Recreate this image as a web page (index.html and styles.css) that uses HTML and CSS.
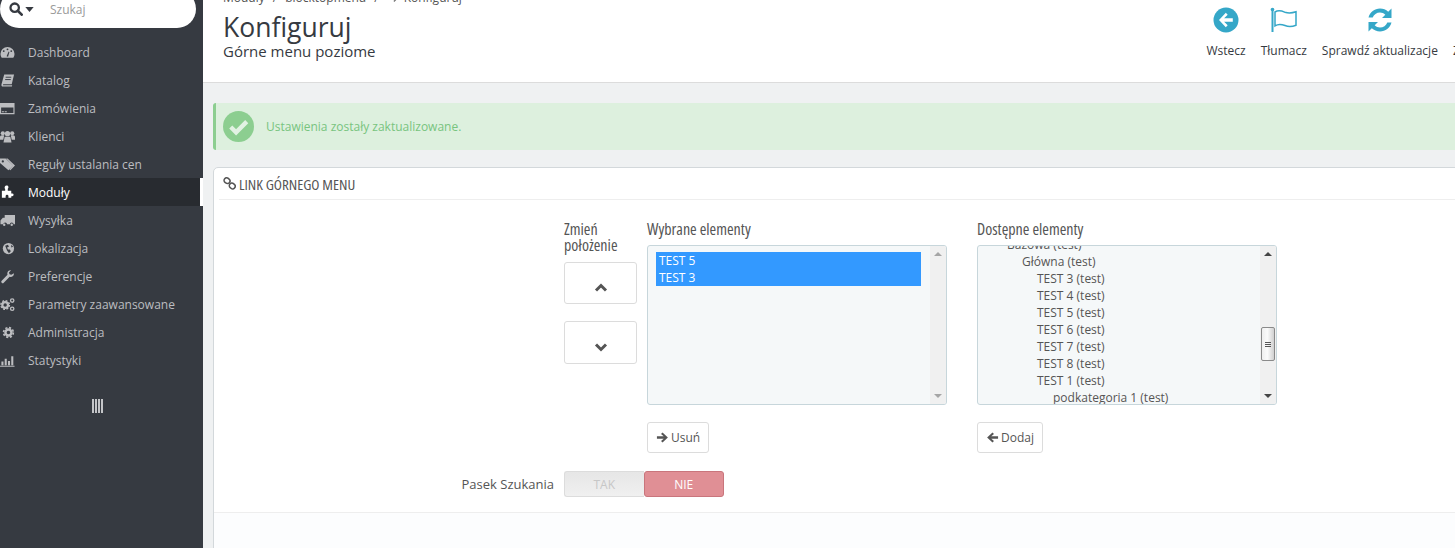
FILE: index.html
```html
<!DOCTYPE html>
<html lang="pl">
<head>
<meta charset="utf-8">
<title>Konfiguruj</title>
<link rel="stylesheet" href="styles.css">
</head>
<body>
<div class="app">
  <nav class="sidebar">
    <div class="search">
      <svg class="search-icon" viewBox="0 0 16 16" width="14" height="14"><circle cx="6.5" cy="6.5" r="4.8" fill="none" stroke="#363a41" stroke-width="2.6"/><path d="M10 10l4.5 4.5" stroke="#363a41" stroke-width="3" stroke-linecap="round"/></svg>
      <svg class="search-caret" viewBox="0 0 10 6" width="9" height="5"><path d="M0 0h10L5 6z" fill="#363a41"/></svg>
      <span class="search-text">Szukaj</span>
    </div>
    <ul class="menu">
      <li class="item"><svg class="ico" viewBox="0 0 16 16"><path d="M8 2a7.5 7.5 0 0 0-7.5 7.5c0 1.600.5 3 1.300 4.200h12.400c.8-1.200 1.300-2.600 1.300-4.200A7.500 7.500 0 0 0 8 2z"/><circle cx="4" cy="6.500" r="1" fill="#363a41"/><circle cx="8" cy="4.600" r="1" fill="#363a41"/><circle cx="12" cy="6.500" r="1" fill="#363a41"/><path d="M7 12l2.200-5 .8.400-1.400 5z" fill="#363a41"/></svg>Dashboard</li>
      <li class="item"><svg class="ico" viewBox="0 0 16 16"><path d="M4.500 1.500h10.500l-2.500 10.500H4c-.7 0-.9.600-.7 1h9.700l-.3 1.500H3c-1.200 0-1.700-1.200-1.400-2.500z"/><path d="M6 4.500h6M5.500 7h6" stroke="#363a41"/></svg>Katalog</li>
      <li class="item"><svg class="ico" viewBox="0 0 16 16"><path fill-rule="evenodd" d="M0 2h15.500v12H0zM1.200 7v5.800h13.100V7z"/><path d="M2 11h2.200v1H2zM5 11h2.200v1H5z"/></svg>Zamówienia</li>
      <li class="item"><svg class="ico" viewBox="0 0 16 16"><circle cx="3" cy="4.500" r="2.200"/><circle cx="13" cy="4.500" r="2.200"/><circle cx="8" cy="5" r="2.800"/><path d="M0 8.500c0-1 1-1.800 2-1.800h2.500L3.500 11.500H0zM16 8.500c0-1-1-1.800-2-1.800h-2.500l1 4.800H16zM5 8.300h6l1.300 6.200H3.700z"/></svg>Klienci</li>
      <li class="item"><svg class="ico" viewBox="0 0 16 16"><path fill-rule="evenodd" d="M0 1.500h6l8 7.500-5 5L0 6.500zM3 3.500a1.200 1.200 0 1 0 0 2.400A1.200 1.200 0 0 0 3 3.500z"/><path d="M8 1.500l8 7.500-5 5-1-.8L13.700 9 6.500 1.500z"/></svg>Reguły ustalania cen</li>
      <li class="item item-active"><svg class="ico" viewBox="0 0 16 16"><path d="M5 2.500a2 2 0 1 1 3.300 1.500V6H12v3h1a1.500 1.500 0 1 1 0 3h-1v1.500H9V12a1.500 1.500 0 1 0-3 0v1.500H2V6h3.500V4.200A2 2 0 0 1 5 2.500z"/></svg>Moduły</li>
      <li class="item"><svg class="ico" viewBox="0 0 16 16"><path d="M5 2h11v10h-1.500a2 2 0 0 0-4 0h-3a2 2 0 0 0-4 0H.500V8L3 5h2z"/><circle cx="4.500" cy="12.500" r="1.300"/><circle cx="12.500" cy="12.500" r="1.300"/></svg>Wysyłka</li>
      <li class="item"><svg class="ico" viewBox="0 0 16 16"><circle cx="9" cy="8" r="6"/><path d="M5.500 5l3-1 1 2-2 1 1 2 2 0 1 2-2 2-2-3zM12 4l2 2-2 1z" fill="#363a41"/></svg>Lokalizacja</li>
      <li class="item"><svg class="ico" viewBox="0 0 16 16"><path d="M14.800 4.500c.4 2-1 3.800-3 4-.6 0-1.100 0-1.500-.2l-6.300 6.300a1.500 1.500 0 0 1-2.200-2.200L8 6c-.2-.5-.3-1-.2-1.600.2-2 2-3.400 4-3l-2.200 2.300.5 2 2 .5z"/></svg>Preferencje</li>
      <li class="item"><svg class="ico" viewBox="0 0 16 16"><circle cx="5.500" cy="8.500" r="3" fill="none" stroke="#bcbdc0" stroke-width="2.400"/><circle cx="5.500" cy="8.500" r="4.600" fill="none" stroke="#bcbdc0" stroke-width="1.500" stroke-dasharray="2 1.600"/><circle cx="13" cy="3.800" r="1.800" fill="none" stroke="#bcbdc0" stroke-width="1.400"/><circle cx="13" cy="12.500" r="1.800" fill="none" stroke="#bcbdc0" stroke-width="1.400"/></svg>Parametry zaawansowane</li>
      <li class="item"><svg class="ico" viewBox="0 0 16 16"><circle cx="9" cy="8" r="3.200" fill="none" stroke="#bcbdc0" stroke-width="2.600"/><circle cx="9" cy="8" r="5.200" fill="none" stroke="#bcbdc0" stroke-width="1.800" stroke-dasharray="2.300 1.780"/></svg>Administracja</li>
      <li class="item"><svg class="ico" viewBox="0 0 16 16"><path d="M0 13.500h15.500v1.200H0zM1.500 9h2.200v4H1.500zM5 6h2.200v7H5zM8.500 8.500h2.200V13H8.500zM12 3.500h2.200V13H12z"/></svg>Statystyki</li>
    </ul>
    <div class="collapse"><span></span><span></span><span></span><span></span></div>
  </nav>

  <main class="content">
    <header class="head">
      <div class="head-title">
        <div class="crumbs"><span>Moduły</span><span class="sep">/</span><span>blocktopmenu</span><span class="sep">/</span><svg viewBox="0 0 8 10" width="7" height="10"><path d="M1 9l4-4-4-4" fill="none" stroke="#777" stroke-width="1.500"/></svg><span>Konfiguruj</span></div>
        <h1>Konfiguruj</h1>
        <h2>Górne menu poziome</h2>
      </div>
      <div class="tools">
        <div class="tool">
          <svg viewBox="0 0 26 26" width="26" height="26"><circle cx="13" cy="13" r="12.500" fill="#35a7c8"/><path d="M12.800 5.800L6 13l6.800 7.200 1.900-1.900-3.600-3.600h8.700v-3.400h-8.700l3.600-3.600z" fill="#fff"/></svg>
          <span>Wstecz</span>
        </div>
        <div class="tool">
          <svg viewBox="0 0 28 26" width="28" height="26"><path d="M2.500 3v22" stroke="#35a7c8" stroke-width="2"/><circle cx="2.500" cy="2.500" r="1.800" fill="#35a7c8"/><path d="M5 5c4-2.500 7-1 10 .3 3 1 5.500 1.400 11-.5v13.400c-5 2-8 1.500-11 .3-3-1.200-6-2.300-10 .3z" fill="none" stroke="#35a7c8" stroke-width="1.500"/></svg>
          <span>Tłumacz</span>
        </div>
        <div class="tool">
          <svg viewBox="0 0 26 26" width="26" height="26"><path d="M1.500 10.500C3 5 7.500 1.500 13 1.500c3.200 0 6 1.200 8.200 3.200L24.500 1.500V11h-9.500l3.300-3.300C16.800 6.300 15 5.500 13 5.500c-3.300 0-6.200 2-7.300 5z" fill="#35a7c8"/><path d="M24.500 15.500C23 21 18.500 24.500 13 24.500c-3.200 0-6-1.200-8.200-3.200L1.500 24.500V15h9.500l-3.300 3.300c1.500 1.400 3.300 2.200 5.300 2.200 3.300 0 6.200-2 7.300-5z" fill="#35a7c8"/></svg>
          <span>Sprawdź aktualizacje</span>
        </div>
        <div class="tool">
          <span class="tool-blank"></span>
          <span>Zarządzaj</span>
        </div>
      </div>
    </header>

    <div class="alert">
      <svg viewBox="0 0 32 32" width="31" height="31"><circle cx="16" cy="16" r="16" fill="#8cce90"/><path d="M8 16.500l5.500 5.500L24.500 11" fill="none" stroke="#e2f2e3" stroke-width="4.500"/></svg>
      <span>Ustawienia zostały zaktualizowane.</span>
    </div>

    <section class="panel">
      <div class="panel-head">
        <svg viewBox="0 0 14 14" width="13" height="13"><g fill="none" stroke="#555" stroke-width="1.700"><rect x="1" y="1" width="6.500" height="5.500" rx="2.700" transform="rotate(40 4 4)"/><rect x="6.500" y="7" width="6.500" height="5.500" rx="2.700" transform="rotate(40 10 10)"/></g></svg>
        <span>LINK GÓRNEGO MENU</span>
      </div>
      <div class="panel-body">
        <div class="pickers">
          <div class="col-move">
            <div class="col-title">Zmień położenie</div>
            <button class="move move-up"><svg viewBox="0 0 14 9" width="14" height="9"><path d="M2 7.500l5-5 5 5" fill="none" stroke="#555" stroke-width="3"/></svg></button>
            <button class="move move-down"><svg viewBox="0 0 14 9" width="14" height="9"><path d="M2 1.500l5 5 5-5" fill="none" stroke="#555" stroke-width="3"/></svg></button>
          </div>
          <div class="col-list">
            <div class="col-title">Wybrane elementy</div>
            <div class="listbox">
              <div class="options options-selected">
                <div class="opt opt-on">TEST 5</div>
                <div class="opt opt-on">TEST 3</div>
              </div>
              <div class="scrollbar">
                <svg class="arrow" viewBox="0 0 8 4" width="8" height="4"><path d="M0 4h8L4 0z"/></svg>
                <svg class="arrow" viewBox="0 0 8 4" width="8" height="4"><path d="M0 0h8L4 4z"/></svg>
              </div>
            </div>
            <button class="btn"><svg viewBox="0 0 14 14" width="13" height="13"><path d="M7 1.500l5.800 5.500L7 12.500l-1.600-1.600L8.300 8.300H1V5.700h7.300L5.400 3.100z" fill="#555"/></svg>Usuń</button>
          </div>
          <div class="col-list col-avail">
            <div class="col-title">Dostępne elementy</div>
            <div class="listbox">
              <div class="options options-avail">
                <div class="opt l1">Bazowa (test)</div>
                <div class="opt l2">Główna (test)</div>
                <div class="opt l3">TEST 3 (test)</div>
                <div class="opt l3">TEST 4 (test)</div>
                <div class="opt l3">TEST 5 (test)</div>
                <div class="opt l3">TEST 6 (test)</div>
                <div class="opt l3">TEST 7 (test)</div>
                <div class="opt l3">TEST 8 (test)</div>
                <div class="opt l3">TEST 1 (test)</div>
                <div class="opt l4">podkategoria 1 (test)</div>
              </div>
              <div class="scrollbar">
                <svg class="arrow" viewBox="0 0 8 4" width="8" height="4"><path d="M0 4h8L4 0z" fill="#444"/></svg>
                <div class="thumb"><i></i><i></i><i></i></div>
                <svg class="arrow" viewBox="0 0 8 4" width="8" height="4"><path d="M0 0h8L4 4z" fill="#444"/></svg>
              </div>
            </div>
            <button class="btn"><svg viewBox="0 0 14 14" width="13" height="13"><path d="M7 1.500L1.200 7 7 12.500l1.600-1.600L5.700 8.300H13V5.700H5.700l2.900-2.600z" fill="#555"/></svg>Dodaj</button>
          </div>
        </div>
        <div class="row-switch">
          <label class="switch-label">Pasek Szukania</label>
          <div class="switch"><span class="sw-yes">TAK</span><span class="sw-no">NIE</span></div>
        </div>
      </div>
      <div class="panel-foot"></div>
    </section>
  </main>
</div>
</body>
</html>
```
FILE: styles.css
```css
* { box-sizing: border-box; }
html, body { margin: 0; height: 548px; overflow: hidden; }
body { font-family: "Open Sans", sans-serif; font-size: 12px; color: #555; background: #eff1f2; }
.app { display: flex; width: 1455px; height: 548px; overflow: hidden; }

.sidebar { flex: 0 0 203px; background: #363a41; height: 548px; }
.search { display: flex; align-items: center; width: 196px; height: 38px; margin-top: -10px; background: #fff; border-radius: 19px; padding-left: 9px; }
.search-icon { margin-right: 2px; }
.search-text { margin-left: 16px; color: #9a9a9a; font-size: 12px; }
.menu { list-style: none; margin: 10px 0 0; padding: 0; }
.item { display: flex; align-items: center; height: 28px; color: #bcbdc0; font-size: 12px; }
.ico { width: 15px; height: 15px; margin-right: 13px; fill: #bcbdc0; flex: none; }
.item-active { background: #282b30; color: #fff; border-right: 3px solid #fff; }
.item-active .ico { fill: #fff; }
.collapse { display: flex; gap: 1px; justify-content: center; margin: 25px 0 0 -8px; height: 14px; }
.collapse span { width: 2px; background: #c4c5c8; }

.content { flex: 1; min-width: 0; display: flex; flex-direction: column; overflow: hidden; }
.head { display: flex; height: 83px; flex: none; background: #fff; border-bottom: 1px solid #dcdcdc; }
.head-title { flex: 0 0 1003.5px; padding-left: 20px; }
.crumbs { display: flex; align-items: center; height: 17px; margin-top: -11px; font-size: 12px; color: #555; }
.sep { margin: 0 8px; }
.crumbs svg { margin: 0 4px 0 6px; }
h1 { margin: 5px 0 0; font-size: 26.5px; line-height: 33px; font-weight: 400; color: #363a41; }
h2 { margin: 0; font-size: 15px; line-height: 15px; font-weight: 400; color: #363a41; }
.tools { display: flex; gap: 15px; flex: none; }
.tool { display: flex; flex-direction: column; align-items: center; padding-top: 7px; font-size: 12px; color: #363a41; white-space: nowrap; }
.tool svg { height: 26px; }
.tool span:last-child { margin-top: 9px; }
.tool-blank { height: 26px; }

.alert { display: flex; align-items: center; gap: 12px; margin: 20px 0 0 10px; height: 47px; padding-left: 7px; background: #ddf0de; border-left: 3px solid #8cce90; border-radius: 3px 0 0 3px; color: #78c47e; font-size: 12px; }

.panel { margin: 17px -10px -10px 10px; background: #fff; border: 1px solid #d3d8db; border-radius: 5px; flex: 1; display: flex; flex-direction: column; }
.panel-head { display: flex; align-items: center; gap: 3px; height: 32px; margin-left: 5px; padding-left: 4px; border-bottom: 1px solid #eee; font-stretch: 75%; font-size: 15px; color: #555; }
.panel-body { flex: none; height: 312px; }
.pickers { display: flex; padding: 21px 0 0 350px; }
.col-move { width: 73px; margin-right: 10px; }
.col-list { width: 300px; }
.col-avail { margin-left: 30px; }
.col-title { font-stretch: 75%; font-size: 16px; line-height: 16px; color: #555; margin-bottom: 8px; }
.col-move .col-title { margin-bottom: 9px; }
.move { display: flex; justify-content: center; width: 73px; background: #fff; border: 1px solid #dcdcdc; border-radius: 3px; padding: 0; }
.move-up { height: 42px; padding-top: 20px; margin-bottom: 17px; }
.move-down { height: 43px; padding-top: 21px; }
.listbox { display: flex; height: 160px; background: #f5f8f9; border: 1px solid #c7d6db; border-radius: 3px; overflow: hidden; }
.options { flex: 1; overflow: hidden; color: #555; font-size: 12px; }
.options-selected { padding: 6px 9px 0 8px; }
.options-avail { margin-top: -10px; }
.opt { height: 17px; line-height: 17px; white-space: nowrap; }
.opt-on { background: #3399ff; color: #fff; padding-left: 3px; }
.l1 { padding-left: 29px; }
.l2 { padding-left: 44px; }
.l3 { padding-left: 59px; }
.l4 { padding-left: 75px; }
.scrollbar { flex: 0 0 16px; display: flex; flex-direction: column; justify-content: space-between; align-items: center; padding: 6px 0; background: #f0f0f0; fill: #a5a5a5; position: relative; }
.thumb { position: absolute; left: 1px; right: 1px; top: 81px; height: 34px; background: linear-gradient(90deg, #eee, #fafafa 45%, #d0d0d0); border: 1px solid #8a8a8a; border-radius: 2px; display: flex; flex-direction: column; gap: 1px; align-items: center; justify-content: center; }
.thumb i { width: 6px; height: 1px; background: #555; }
.btn { display: flex; align-items: center; gap: 2px; height: 31px; margin-top: 17px; padding: 0 8px; background: #fff; border: 1px solid #dcdcdc; border-radius: 3px; font: 12px "Open Sans", sans-serif; color: #555; }
.row-switch { display: flex; align-items: center; margin-top: 18px; }
.switch-label { width: 340px; text-align: right; font-size: 13px; color: #555; margin-right: 10px; }
.switch { display: flex; width: 160px; height: 26px; }
.switch span { flex: 1; display: flex; align-items: center; justify-content: center; font-size: 12px; }
.sw-yes { background: linear-gradient(#e6e6e6, #f0f0f0); color: #c7c7c7; border: 1px solid #dcdcdc; border-right: 0; border-radius: 3px 0 0 3px; }
.sw-no { background: #e08f95; color: #fff; border: 1px solid #c9757c; border-radius: 3px; }
.panel-foot { flex: 1; background: #fcfdfe; border-top: 1px solid #eee; }
```
